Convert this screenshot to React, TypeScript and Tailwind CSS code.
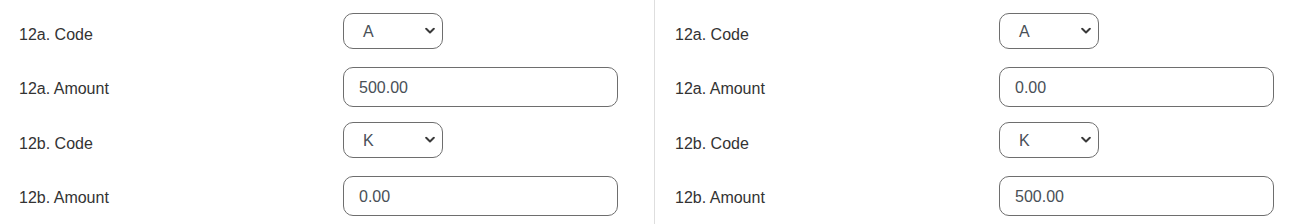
import React from "react";

type Row = { label: string; kind: "select" | "input"; value: string };

const Chevron = () => (
  <svg width="10" height="7" viewBox="0 0 10 7" className="pointer-events-none absolute right-[7px] top-1/2 -translate-y-1/2">
    <path d="M1.2 1.3 L5 5 L8.8 1.3" fill="none" stroke="#3a3a3a" strokeWidth="2" strokeLinecap="round" strokeLinejoin="round" />
  </svg>
);

const FormRow = ({ row }: { row: Row }) => (
  <div className={row.kind === "select" ? "flex items-start h-[36px] mb-[18px]" : "flex items-start h-[40px] mb-[15px]"}>
    <div className="w-[324px] pt-[10px] leading-6 text-[16px] text-[#333333]">{row.label}</div>
    {row.kind === "select" ? (
      <div className="relative w-[100px] h-[36px] border border-[#6e6e6e] rounded-[10px] bg-white flex items-center pl-[19px] pt-[1px] text-[16px] text-[#495057]">
        {row.value}
        <Chevron />
      </div>
    ) : (
      <div className="w-[275px] h-[40px] border border-[#6e6e6e] rounded-[10px] bg-white flex items-center pl-[15px] pt-[1px] text-[16px] text-[#495057]">
        {row.value}
      </div>
    )}
  </div>
);

export default function App() {
  const left: Row[] = [
    { label: "12a. Code", kind: "select", value: "A" },
    { label: "12a. Amount", kind: "input", value: "500.00" },
    { label: "12b. Code", kind: "select", value: "K" },
    { label: "12b. Amount", kind: "input", value: "0.00" },
  ];
  const right: Row[] = [
    { label: "12a. Code", kind: "select", value: "A" },
    { label: "12a. Amount", kind: "input", value: "0.00" },
    { label: "12b. Code", kind: "select", value: "K" },
    { label: "12b. Amount", kind: "input", value: "500.00" },
  ];
  return (
    <div className="w-[1308px] h-[224px] bg-white flex overflow-hidden" style={{ fontFamily: '"Liberation Sans", Arial, sans-serif' }}>
      <div className="w-[654px] pl-[19px] pt-[13px]">
        {left.map((r, i) => (
          <FormRow key={i} row={r} />
        ))}
      </div>
      <div className="w-[654px] border-l border-[#dedede] pl-[20px] pt-[13px]">
        {right.map((r, i) => (
          <FormRow key={i} row={r} />
        ))}
      </div>
    </div>
  );
}
